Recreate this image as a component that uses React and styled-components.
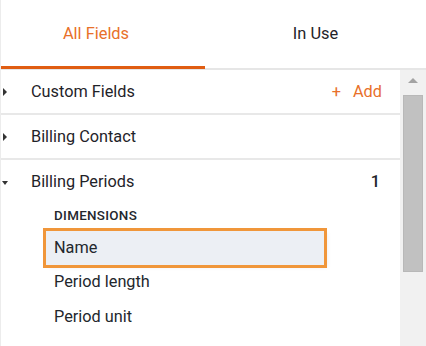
import React from 'react';
import styled, { createGlobalStyle } from 'styled-components';

const GlobalStyle = createGlobalStyle`
  body {
    margin: 0;
    background: #fff;
    font-family: Roboto, "Liberation Sans", sans-serif;
  }
`;

const Panel = styled.div`
  width: 426px;
  height: 346px;
  display: flex;
  flex-direction: column;
  box-sizing: border-box;
  border-left: 1px solid #ececec;
  overflow: hidden;
`;

const Tabs = styled.div`
  display: flex;
  height: 70px;
  box-sizing: border-box;
  border-bottom: 2px solid #e6e6e6;
`;

const Tab = styled.div`
  position: relative;
  width: ${p => p.$width};
  flex: ${p => (p.$width ? 'none' : '1')};
  display: flex;
  align-items: center;
  justify-content: center;
  padding-right: ${p => p.$shift || 0}px;
  padding-bottom: 2px;
  box-sizing: border-box;
  font-size: 16.4px;
  color: ${p => (p.$active ? '#e8702a' : '#1f2329')};
  &::after {
    content: '';
    display: ${p => (p.$active ? 'block' : 'none')};
    position: absolute;
    left: 0;
    right: 0;
    bottom: -1px;
    height: 3px;
    background: #e05d12;
  }
`;

const Body = styled.div`
  flex: 1;
  display: flex;
  min-height: 0;
`;

const List = styled.div`
  flex: 1;
`;

const Row = styled.div`
  height: ${p => (p.$open ? '43px' : '45px')};
  box-sizing: border-box;
  border-bottom: ${p => (p.$open ? 'none' : '2px solid #e8e8e8')};
  display: flex;
  align-items: center;
  position: relative;
  padding: 0 18px 1px 30px;
  font-size: 16.3px;
  color: #1f2329;
`;

const Caret = styled.span`
  position: absolute;
  left: 2px;
  top: 50%;
  width: 0;
  height: 0;
  ${p =>
    p.$open
      ? `
    margin-top: -1px;
    left: 1px;
    border-top: 4px solid #333;
    border-left: 3.5px solid transparent;
    border-right: 3.5px solid transparent;
  `
      : `
    margin-top: -4px;
    border-left: 4px solid #333;
    border-top: 4px solid transparent;
    border-bottom: 4px solid transparent;
  `}
`;

const Label = styled.span`
  flex: 1;
`;

const AddLink = styled.span`
  color: #e8702a;
  display: flex;
  align-items: center;
  gap: 12px;
`;

const Count = styled.span`
  font-weight: 500;
  margin-right: 2px;
`;

const Group = styled.div`
  padding: 0 0 0 45px;
`;

const GroupTitle = styled.div`
  height: 26px;
  display: flex;
  align-items: center;
  padding-left: 8px;
  font-size: 13.4px;
  font-weight: 500;
  letter-spacing: 0.3px;
  color: #23272d;
  margin-top: -1px;
  margin-bottom: 3px;
`;

const Item = styled.div`
  width: 278px;
  height: ${p => (p.$selected ? '34px' : '34.5px')};
  box-sizing: border-box;
  display: flex;
  align-items: center;
  padding-left: 8px;
  padding-bottom: 1px;
  font-size: 16.3px;
  color: #23272d;
  background: ${p => (p.$selected ? '#eceff4' : 'transparent')};
  outline: ${p => (p.$selected ? '3px solid #f0963a' : 'none')};
  box-shadow: ${p => (p.$selected ? '3px 2px 4px rgba(120, 130, 160, 0.18)' : 'none')};
`;

const Scrollbar = styled.div`
  width: 26px;
  background: #f1f1f1;
  display: flex;
  flex-direction: column;
  align-items: center;
  padding-top: 8px;
  box-sizing: border-box;
`;

const UpArrow = styled.div`
  width: 0;
  height: 0;
  border-bottom: 5px solid #a3a3a3;
  border-left: 5px solid transparent;
  border-right: 5px solid transparent;
`;

const Thumb = styled.div`
  margin-top: 12px;
  width: 20px;
  height: 177px;
  box-sizing: border-box;
  background: #c1c1c1;
  border: 1px solid #b8b8b8;
`;

export default function App() {
  return (
    <>
      <GlobalStyle />
      <Panel>
        <Tabs>
          <Tab $active $width="204px" $shift={14}>All Fields</Tab>
          <Tab>In Use</Tab>
        </Tabs>
        <Body>
          <List>
            <Row>
              <Caret />
              <Label>Custom Fields</Label>
              <AddLink>
                <span>+</span>
                <span>Add</span>
              </AddLink>
            </Row>
            <Row>
              <Caret />
              <Label>Billing Contact</Label>
            </Row>
            <Row $open>
              <Caret $open />
              <Label>Billing Periods</Label>
              <Count>1</Count>
            </Row>
            <Group>
              <GroupTitle>DIMENSIONS</GroupTitle>
              <Item $selected>Name</Item>
              <Item>Period length</Item>
              <Item>Period unit</Item>
            </Group>
          </List>
          <Scrollbar>
            <UpArrow />
            <Thumb />
          </Scrollbar>
        </Body>
      </Panel>
    </>
  );
}
